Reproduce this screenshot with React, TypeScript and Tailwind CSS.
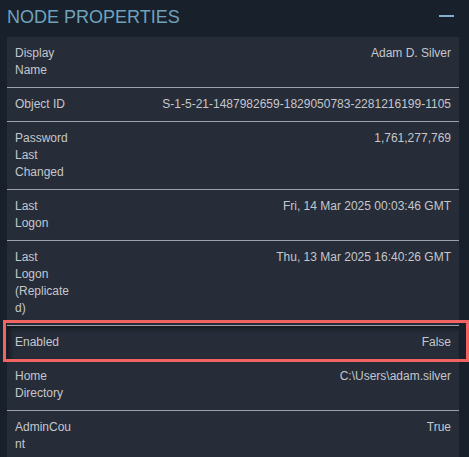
const rows: { label: string; value: string; highlight?: boolean }[] = [
  { label: "Display Name", value: "Adam D. Silver" },
  { label: "Object ID", value: "S-1-5-21-1487982659-1829050783-2281216199-1105" },
  { label: "Password Last Changed", value: "1,761,277,769" },
  { label: "Last Logon", value: "Fri, 14 Mar 2025 00:03:46 GMT" },
  { label: "Last Logon (Replicated)", value: "Thu, 13 Mar 2025 16:40:26 GMT" },
  { label: "Enabled", value: "False", highlight: true },
  { label: "Home Directory", value: "C:\\Users\\adam.silver" },
  { label: "AdminCount", value: "True" },
];

export default function App() {
  return (
    <div className="w-[469px] h-[457px] overflow-hidden bg-[#18202b] font-['Liberation_Sans',Arial,sans-serif]">
      {/* Header */}
      <div className="h-[37px] pl-[7px] pr-[15px] pt-[7px] flex items-start justify-between">
        <h2 className="text-[18px] leading-[20px] text-[#6fa2bd] uppercase">Node Properties</h2>
        <div className="mt-[8px] w-[15px] h-[2px] bg-[#7db1cc]" />
      </div>

      {/* Properties table */}
      <div className="ml-[7px] w-[452px] bg-[#262c38]">
        {rows.map((r) => (
          <div
            key={r.label}
            className={`relative flex justify-between gap-2 px-2 py-2 text-[12px] leading-[17px] text-[#c5c7cb] border-b border-[#9da3a9] ${
              r.highlight ? "shadow-[inset_3px_3px_4px_rgba(0,0,0,0.45)]" : ""
            }`}
          >
            <span className="w-[57px] shrink-0 break-words">{r.label}</span>
            <span className="flex-1 text-right">{r.value}</span>
            {r.highlight && (
              <div className="absolute -left-[4px] -top-[6px] -right-[10px] -bottom-[3px] border-[3px] border-[#f26464] pointer-events-none" />
            )}
          </div>
        ))}
      </div>
    </div>
  );
}
